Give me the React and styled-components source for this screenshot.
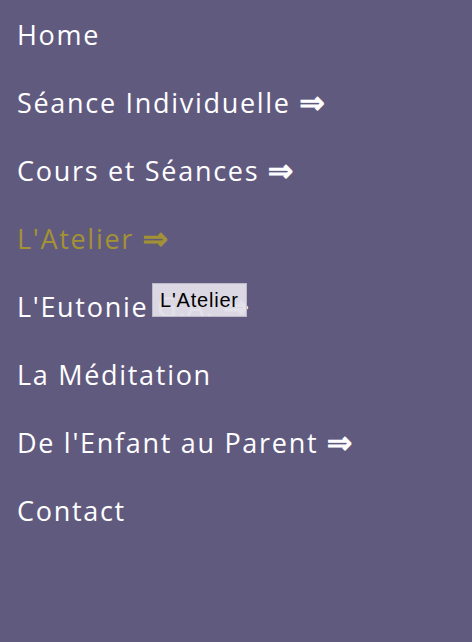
import React from "react";
import styled, { createGlobalStyle } from "styled-components";

const Global = createGlobalStyle`
  html, body { margin: 0; padding: 0; background: #615a7f; }
  body { width: 472px; height: 642px; overflow: hidden; }
`;

const Nav = styled.nav`
  position: relative;
  background: #615a7f;
  width: 472px;
  height: 642px;
  box-sizing: border-box;
  padding: 15px 0 0 17px;
`;

const List = styled.ul`
  list-style: none;
  margin: 0;
  padding: 0;
  display: flex;
  flex-direction: column;
`;

const Item = styled.li`
  height: 68px;
  display: flex;
  align-items: flex-start;
`;

const Link = styled.a`
  font-family: "Open Sans", sans-serif;
  font-size: 27px;
  line-height: 40px;
  letter-spacing: 1.7px;
  color: ${(p) => (p.$active ? "#a39234" : "#ffffff")};
  text-decoration: none;
  white-space: nowrap;
`;

const Arrow = styled.span`
  font-family: "DejaVu Sans", sans-serif;
  font-weight: normal;
  font-size: 30px;
  line-height: 40px;
  letter-spacing: 0;
  -webkit-text-stroke: 1.3px currentColor;
`;

const Tooltip = styled.div`
  position: absolute;
  left: 152px;
  top: 283px;
  height: 34px;
  padding: 0 7px;
  box-sizing: border-box;
  display: flex;
  align-items: center;
  background: rgba(226, 223, 233, 0.95);
  border: 1px solid #bdb9c8;
  font-family: "Liberation Sans", Arial, sans-serif;
  font-size: 20px;
  letter-spacing: 0.8px;
  color: #000;
`;

const items = [
  { label: "Home" },
  { label: "Séance Individuelle", arrow: true },
  { label: "Cours et Séances", arrow: true },
  { label: "L'Atelier", arrow: true, active: true },
  { label: "L'Eutonie G.A.", arrow: true },
  { label: "La Méditation" },
  { label: "De l'Enfant au Parent", arrow: true },
  { label: "Contact" },
];

export default function App() {
  return (
    <>
      <Global />
      <Nav>
        <List>
          {items.map((it) => (
            <Item key={it.label}>
              <Link href="#" $active={it.active}>
                {it.label}
                {it.arrow && (
                  <>
                    {" "}
                    <Arrow>⇒</Arrow>
                  </>
                )}
              </Link>
            </Item>
          ))}
        </List>
        <Tooltip>L'Atelier</Tooltip>
      </Nav>
    </>
  );
}
